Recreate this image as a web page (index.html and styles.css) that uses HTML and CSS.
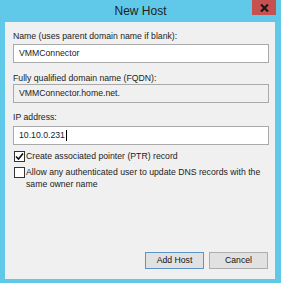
FILE: index.html
```html
<!DOCTYPE html>
<html>
<head>
<meta charset="utf-8">
<link rel="stylesheet" href="styles.css">
</head>
<body>
<div class="window">
  <div class="titlebar">
    <div class="title">New Host</div>
    <div class="close">
      <svg width="9" height="8" viewBox="0 0 9 8"><path d="M1 0.5 L8 7.5 M8 0.5 L1 7.5" stroke="#1a1a1a" stroke-width="2.2"/></svg>
    </div>
  </div>
  <div class="client">
    <div class="label first">Name (uses parent domain name if blank):</div>
    <div class="field">VMMConnector</div>
    <div class="label second">Fully qualified domain name (FQDN):</div>
    <div class="field readonly">VMMConnector.home.net.</div>
    <div class="label third">IP address:</div>
    <div class="field ip">10.10.0.231<span class="caret"></span></div>
    <div class="check first-check">
      <span class="box"><svg width="9" height="9" viewBox="0 0 9 9"><path d="M1 4.5 L3.5 7 L8 1.5" fill="none" stroke="#111" stroke-width="1.6"/></svg></span>
      <span class="check-text">Create associated pointer (PTR) record</span>
    </div>
    <div class="check second-check">
      <span class="box"></span>
      <span class="check-text">Allow any authenticated user to update DNS records with the<br>same owner name</span>
    </div>
    <div class="buttons">
      <div class="btn default">Add Host</div>
      <div class="btn">Cancel</div>
    </div>
  </div>
</div>
</body>
</html>
```
FILE: styles.css
```css
html, body {
  margin: 0;
  padding: 0;
}
body {
  background: #60c8e9;
  font-family: "Liberation Sans", Arial, sans-serif;
  font-size: 8.7px;
  line-height: 12px;
  color: #1b1b1b;
}
.window {
  width: 281px;
  height: 283px;
  background: #60c8e9;
  display: flex;
  flex-direction: column;
  box-sizing: border-box;
}
.titlebar {
  height: 22px;
  display: grid;
  grid-template-columns: 1fr auto 1fr;
  align-items: start;
  flex: none;
}
.title {
  grid-column: 2;
  font-size: 12px;
  line-height: 22px;
  color: #1e1e1e;
}
.close {
  grid-column: 3;
  justify-self: end;
  width: 24px;
  height: 15px;
  margin-right: 5px;
  background: #c75050;
  display: flex;
  align-items: center;
  justify-content: center;
}
.close svg {
  display: block;
}
.client {
  flex: 1;
  margin: 0 6px 4px 5px;
  background: #f0f0f0;
  padding: 8px 6px 10px 8px;
  display: flex;
  flex-direction: column;
}
.label {
  height: 12px;
  white-space: nowrap;
}
.label.second {
  margin-top: 9px;
}
.label.third {
  margin-top: 8px;
}
.field {
  margin-top: 2px;
  height: 19px;
  box-sizing: border-box;
  border: 1px solid #a9a9a9;
  background: #fff;
  padding: 0 5px;
  line-height: 17px;
  display: flex;
  align-items: center;
}
.label.second + .field {
  margin-top: 0;
}
.field.readonly {
  background: #f0f0f0;
}
.field.ip {
  margin-top: 3px;
}
.caret {
  display: inline-block;
  width: 1px;
  height: 11px;
  background: #000;
  margin-left: 1px;
}
.check {
  display: flex;
  align-items: flex-start;
  padding-left: 1px;
}
.first-check {
  margin-top: 5px;
}
.second-check {
  margin-top: 4px;
}
.box {
  flex: none;
  width: 11px;
  height: 11px;
  box-sizing: border-box;
  border: 1px solid #333;
  background: #fff;
  margin-top: 1px;
  margin-right: 1px;
  display: flex;
  align-items: center;
  justify-content: center;
}
.box svg {
  display: block;
}
.check-text {
  white-space: nowrap;
}
.buttons {
  margin-top: auto;
  display: flex;
  justify-content: flex-end;
  gap: 5px;
  padding-right: 1px;
}
.btn {
  width: 59px;
  height: 17px;
  box-sizing: border-box;
  border: 1px solid #adadad;
  background: #e1e1e1;
  text-align: center;
  line-height: 15px;
  color: #111;
}
.btn.default {
  border-color: #5b95c7;
}
```
